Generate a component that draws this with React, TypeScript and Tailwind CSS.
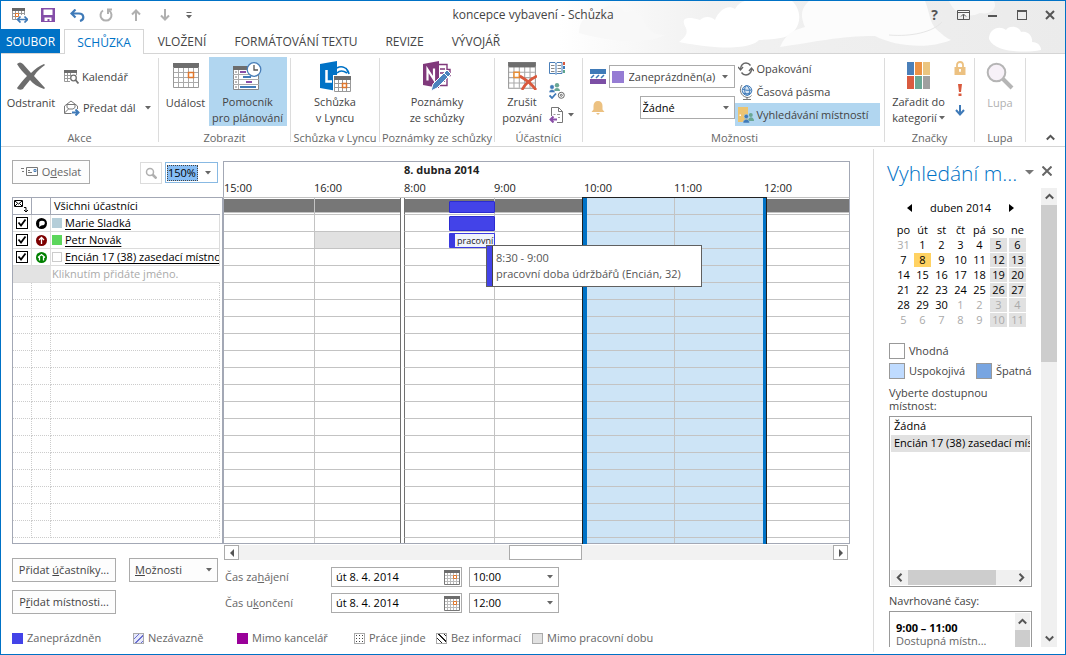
import type { ReactNode } from 'react'
import { clsx } from 'clsx'

const HOURS = ['15:00', '16:00', '8:00', '9:00', '10:00', '11:00', '12:00']
const SELECTED_HOURS = [4, 5]
const EMPTY_ROWS = Array.from({ length: 15 }, (_, i) => i)
const GRID_ROWS = Array.from({ length: 19 }, (_, i) => i)

const WEEK_DAYS = ['po', 'út', 'st', 'čt', 'pá', 'so', 'ne']
const WEEKS = [
  [31, 1, 2, 3, 4, 5, 6],
  [7, 8, 9, 10, 11, 12, 13],
  [14, 15, 16, 17, 18, 19, 20],
  [21, 22, 23, 24, 25, 26, 27],
  [28, 29, 30, 1, 2, 3, 4],
  [5, 6, 7, 8, 9, 10, 11],
]

/* ---------- icons ---------- */

function CaretIcon({ className }: { className?: string }) {
  return (
    <svg viewBox="0 0 6 4" className={clsx('h-1 w-1.5 shrink-0', className)} aria-hidden="true">
      <path d="M0 0h6L3 3.5z" fill="#666" />
    </svg>
  )
}

function ChevronIcon({ className }: { className?: string }) {
  return (
    <svg viewBox="0 0 9 9" className={clsx('size-[9px] shrink-0', className)} fill="none" stroke="#555" strokeWidth="2" aria-hidden="true">
      <path d="M.8 6.5 4.5 2.8l3.7 3.7" />
    </svg>
  )
}

function CalendarIcon({ className, crossed }: { className?: string; crossed?: boolean }) {
  return (
    <svg viewBox="0 0 28 26" className={clsx('shrink-0', className)} aria-hidden="true">
      <path d="M1 1h26v24H1z" fill="#fff" />
      <path d="M6.500 1v23M11.500 1v23M16.500 1v23M21.500 1v23M1 9.500h25M1 14.500h25M1 19.500h25" fill="none" stroke="#aaa" />
      <path d="M1 0h26v5H1z" fill="#6d6d6d" />
      <path d="M1.500 4v20.500h25V4" fill="none" stroke="#999" />
      {crossed ? (
        <>
          <path d="M6.500 9.500h5v5h-5z" fill="#fff" stroke="#e88e35" strokeWidth="1.400" />
          <path d="M12 13c5 3 11 7 15 13M28 13c-6 3-11 7-14 13" fill="none" stroke="#d9593d" strokeWidth="2.600" />
        </>
      ) : (
        <path d="M16.500 9.500h5v5h-5z" fill="#fff" stroke="#e0762b" strokeWidth="1.500" />
      )}
    </svg>
  )
}

function CalendarSearchIcon() {
  return (
    <svg viewBox="0 0 15 14" className="h-3.5 w-[15px] shrink-0" fill="none" aria-hidden="true">
      <path d="M.500 1v10.500H6M12.500 1v4M3.500 3v8M6.500 3v3M1 5.500h5M1 8.500h5" stroke="#999" />
      <path d="M0 0h13v3H0z" fill="#6d6d6d" />
      <circle cx="9.500" cy="8" r="2.800" fill="#fff" stroke="#6d6d6d" strokeWidth="1.300" />
      <path d="m11.500 10 3 3.500" stroke="#6d6d6d" strokeWidth="1.800" />
    </svg>
  )
}

function DateIcon() {
  return (
    <svg viewBox="0 0 16 15" className="h-[15px] w-4" fill="none" aria-hidden="true">
      <path d="M3.500 3v11M6.500 3v11M9.500 3v11M12.500 3v11M1 5.500h14M1 8.500h14M1 11.500h14" stroke="#bbb" />
      <path d="M.500.500v14h15V.500" stroke="#777" />
      <path d="M0 0h16v3H0z" fill="#6d6d6d" />
      <path d="M9.500 5.500h3v3h-3z" fill="#fff" stroke="#e0762b" />
    </svg>
  )
}

function DeleteIcon() {
  return (
    <svg viewBox="0 0 30 28" className="h-7 w-[30px]" aria-hidden="true">
      <path d="M1 2c2-2 4-2 6 0l8 9c4-4 8-7 13-9l1 1C25 6 21 9 18 14l11 12-1 1c-6-2-11-5-14-9-3 4-6 7-7 9-2 1-5 1-6-1 3-4 6-8 10-12C7 10 4 7 1 2z" fill="#6d6d6d" />
    </svg>
  )
}

function ForwardIcon() {
  return (
    <svg viewBox="0 0 16 16" className="size-4 shrink-0" fill="none" aria-hidden="true">
      <path d="M.500 6 7 1l6.500 5v3M.500 6v7.500h7M.500 13l4-4" stroke="#777" />
      <path d="M3 4.500h8v3L9 9H5L3 7.500z" fill="#fff" stroke="#777" />
      <path d="M8 12.500h6M11.500 9.500l3 3-3 3" stroke="#3f7ab8" strokeWidth="2" />
    </svg>
  )
}

function PlannerIcon() {
  return (
    <svg viewBox="0 0 29 28" className="h-7 w-[29px]" aria-hidden="true">
      <path d="M.500 5h25v22.500H.500z" fill="#fff" stroke="#888" />
      <path d="M0 4h26v4H0z" fill="#6d6d6d" />
      <path d="M5.500 8v19M0 12.500h26M0 17.500h26M0 22.500h26" stroke="#aaa" />
      <path d="M2 10h2M2 15h2M2 20h2M2 25h2" stroke="#777" />
      <path d="M7 10h6M13 20h6" stroke="#8a4fa8" strokeWidth="2" />
      <path d="M10 15h8M7 25h16" stroke="#3f7ab8" strokeWidth="2" />
      <circle cx="21" cy="7.500" r="6.800" fill="#fff" stroke="#4a7fb9" strokeWidth="1.300" />
      <path d="M21 3v5h4" fill="none" stroke="#555" strokeWidth="1.300" />
    </svg>
  )
}

function LyncIcon() {
  return (
    <svg viewBox="0 0 32 32" className="size-8" aria-hidden="true">
      <path d="M18 8c5-3 11 0 12 6M18 13c3-3 7-2 10 0M27 8l3 6" fill="none" stroke="#0072c6" strokeWidth="1.600" />
      <path d="M1 4 18 1v30L1 28z" fill="#0072c6" />
      <path d="M7.500 10v11.500H13" fill="none" stroke="#fff" strokeWidth="2.500" />
      <path d="M14 15h18v17H14z" fill="#fff" />
      <path d="M15.500 16v15.500h16V16M19.500 19v12M23.500 19v12M27.500 19v12M15 23.500h16M15 27.500h16" fill="none" stroke="#999" />
      <path d="M15 16h17v4H15z" fill="#6d6d6d" />
      <path d="M23.500 23.500h4v4h-4z" fill="#fff" stroke="#e0762b" strokeWidth="1.500" />
    </svg>
  )
}

function OneNoteIcon() {
  return (
    <svg viewBox="0 0 30 32" className="h-8 w-[30px]" aria-hidden="true">
      <path d="M16 4.500h9v5h3v6h-3v10h-9M18 9h5M18 13h5M18 17h5M18 21h5" fill="none" stroke="#80397b" strokeWidth="1.400" />
      <path d="M1 4 17 1v27L1 25z" fill="#80397b" />
      <path d="M5.500 20.500V9.500l6.500 10V8.500" fill="none" stroke="#fff" strokeWidth="2.200" />
      <path d="m9 31 2-7L25 10l4 4-14 14z" fill="#4a82bd" stroke="#fff" />
      <path d="m22 13 4 4" stroke="#fff" />
    </svg>
  )
}

function AddressBookIcon() {
  return (
    <svg viewBox="0 0 16 14" className="h-3.5 w-4" aria-hidden="true">
      <path d="M.500 1.500H6l1 1 1-1h5v11H8l-1 1-1-1H.500zM7 2v11" fill="#fff" stroke="#4a7fb9" />
      <path d="M2 4.500h3.500M2 7.500h3.500M2 10.500h3.500M8.500 4.500H12M8.500 7.500H12M8.500 10.500H12" stroke="#888" />
      <path d="M14 1h2v3h-2z" fill="#d9593d" />
      <path d="M14 5h2v3h-2z" fill="#3f7ab8" />
      <path d="M14 9h2v3h-2z" fill="#5fa58e" />
    </svg>
  )
}

function CheckNamesIcon() {
  return (
    <svg viewBox="0 0 16 16" className="size-4" aria-hidden="true">
      <circle cx="8" cy="2.300" r="2.200" fill="#6aa795" />
      <path d="M5 8c0-4 6-4 6 0z" fill="#6aa795" />
      <circle cx="3" cy="4" r="2.200" fill="#3f7ab8" stroke="#fff" strokeWidth=".400" />
      <path d="M0 9.500c0-4 6-4 6 0z" fill="#3f7ab8" stroke="#fff" strokeWidth=".400" />
      <path d="m.500 12.500 2.500 2.500L7 10.500" fill="none" stroke="#3f7ab8" strokeWidth="1.800" />
      <circle cx="12.300" cy="12.300" r="3" fill="none" stroke="#666" />
      <circle cx="12.300" cy="12.300" r="1" fill="none" stroke="#666" />
    </svg>
  )
}

function ResponseIcon() {
  return (
    <svg viewBox="0 0 15 16" className="h-4 w-[15px]" aria-hidden="true">
      <path d="M2.500 9V.500h7l4 4v11H8M9.500.500v4h4" fill="#fff" stroke="#777" />
      <path d="M4.500 7.500h2M8 7.500h3M9 10.500h2" stroke="#999" />
      <path d="M8 12.500H2M4.500 9.500l-3 3 3 3" fill="none" stroke="#8a4fa8" strokeWidth="2" />
    </svg>
  )
}

function StatusIcon() {
  return (
    <svg viewBox="0 0 16 15" className="h-[15px] w-4 shrink-0" aria-hidden="true">
      <path d="M0 0h16v5H0z" fill="#3f7ab8" />
      <path d="m1 9 3-3M6 9l3-3M11 9l3-3" stroke="#3f7ab8" strokeWidth="1.500" />
      <path d="M0 10h16v5H0z" fill="#7c4fa5" />
    </svg>
  )
}

function BellIcon() {
  return (
    <svg viewBox="0 0 14 14" className="size-3.5" aria-hidden="true">
      <path d="M7 0c3 0 4.500 2 4.500 5v3.500L13.500 11H.500l2-2.500V5C2.500 2 4 0 7 0zM5 12h4l-2 2z" fill="#ecc181" />
    </svg>
  )
}

function RecurrenceIcon() {
  return (
    <svg viewBox="0 0 16 14" className="h-3.5 w-4 shrink-0" fill="none" stroke="#666" strokeWidth="1.400" aria-hidden="true">
      <path d="M2.500 7C2.500 3.500 5 1 8 1c2 0 3.500 1 4.500 2.500M13.500 7c0 3.500-2.500 6-5.500 6-2 0-3.500-1-4.500-2.500" />
      <path d="m0 5 2.500 3L5 5M11 9l2.500-3L16 9" />
    </svg>
  )
}

function GlobeIcon() {
  return (
    <svg viewBox="0 0 16 16" className="size-4 shrink-0" fill="none" aria-hidden="true">
      <circle cx="9" cy="6.500" r="4.800" fill="#d5e4f3" stroke="#3f7ab8" />
      <path d="M4.500 5c3 1.500 6 1.500 9 1M5 9c3 1 5 1 8 0M8 1.500c-2 3-2 7 1 10M8.500 1.500c4 3 4 7 1 10" stroke="#3f7ab8" />
      <path d="M4 1C1 5 2 12 9 13.500c2 0 3.500-.500 4.500-2M9 13v2M5 15.500h8" stroke="#777" />
    </svg>
  )
}

function RoomFinderIcon() {
  return (
    <svg viewBox="0 0 16 16" className="size-4 shrink-0" aria-hidden="true">
      <path d="M0 0h10v15H0z" fill="#ecc471" />
      <path d="M1.500 7.500h1.500v1.500H1.500z" fill="#fff" />
      <circle cx="12.800" cy="8" r="2" fill="#6aa795" />
      <path d="M10 14c0-5 6-5 6 0z" fill="#6aa795" />
      <circle cx="8.300" cy="9.500" r="2.200" fill="#3f7ab8" stroke="#b1d6f0" strokeWidth=".500" />
      <path d="M5 16c0-5 6.500-5 6.500 0z" fill="#3f7ab8" stroke="#b1d6f0" strokeWidth=".500" />
    </svg>
  )
}

function CategoriesIcon() {
  return (
    <svg viewBox="0 0 23 27" className="h-[27px] w-[23px]" aria-hidden="true">
      <path d="M0 0h7v13H0z" fill="#4a7fb9" />
      <path d="M8 0h7v13H8z" fill="#eb9245" />
      <path d="M16 0h7v13h-7z" fill="#ebc580" />
      <path d="M0 14h7v13H0z" fill="#d95b40" />
      <path d="M8 14h7v13H8z" fill="#6aa795" />
      <path d="M16 14h7v13h-7z" fill="#a0a0a0" />
    </svg>
  )
}

function LockIcon() {
  return (
    <svg viewBox="0 0 12 14" className="h-3.5 w-3" aria-hidden="true">
      <path d="M3 7V4c0-4 6-4 6 0v3" fill="none" stroke="#ecc181" strokeWidth="1.800" />
      <path d="M.500 6h11v8H.500z" fill="#ecc181" />
      <path d="M6 8v3M5 9h2" stroke="#fff" strokeWidth="1.400" />
    </svg>
  )
}

function LensIcon() {
  return (
    <svg viewBox="0 0 28 28" className="size-7" aria-hidden="true">
      <circle cx="10.500" cy="10.500" r="8.800" fill="#f7f1f8" stroke="#b5b5b5" strokeWidth="2" />
      <path d="m17 17 9 9" stroke="#b5b5b5" strokeWidth="4" />
    </svg>
  )
}

function CloudArt() {
  return (
    <svg viewBox="0 0 506 52" preserveAspectRatio="xMaxYMin slice" className="absolute right-0 top-0 h-[52px] w-[506px]" aria-hidden="true">
      <defs>
        <linearGradient id="sky">
          <stop offset="0" stopColor="#fff" />
          <stop offset=".3" stopColor="#f1f1f1" />
          <stop offset="1" stopColor="#ebebeb" />
        </linearGradient>
      </defs>
      <path d="M0 0h506v52H0z" fill="url(#sky)" />
      <path d="M20 32c0-12 6-18 18-18 5-12 22-12 28-3 12-3 19 5 21 14 6 5 7 9 19 9-18 9-50 8-86-2z" fill="#f8f8f8" />
      <path d="M120 41c6-5 9-8 7-14-6-10 0-12 14-8 4-4 11-4 15 0 4-10 13-16 20-11 4-7 10-9 14-8h43c8 7 10 20 3 29-6 8-16 9-36 10-4 5-24 13-80 2z" fill="#fff" />
      <path d="M221 46c6-14 14-17 25-20-6-14-2-20 4-26h116c5 12 4 20 11 28 6 5 10 9 15 11-24 10-56 6-76-4-36 0-60 6-95 11z" fill="#fcfcfc" />
      <path d="M330 34c22 2 44-3 53-13" fill="none" stroke="#e6e6e6" />
      <path d="M390 0h45c4 8-4 14-14 12-12 6-26 1-31-12z" fill="#f8f8f8" />
      <path d="M430 38c0-10 10-14 17-9 3-5 13-4 15 2 8-2 12 6 11 10 6 0 9 4 9 8-16 3-46 3-52-11z" fill="#fff" />
    </svg>
  )
}

/* ---------- shared controls ---------- */

interface SelectProps {
  label: string
  options: string[]
  className: string
  selectClassName?: string
}

function Select({ label, options, className, selectClassName }: SelectProps) {
  return (
    <div className={clsx('relative flex items-center', className)}>
      <select
        aria-label={label}
        className={clsx('h-full w-full appearance-none border-[#ababab] bg-transparent outline-none', selectClassName)}
      >
        {options.map((option) => (
          <option key={option}>{option}</option>
        ))}
      </select>
      <CaretIcon className="pointer-events-none absolute right-1.5" />
    </div>
  )
}

function PushButton({ children, className }: { children: ReactNode; className?: string }) {
  return (
    <button type="button" className={clsx('flex h-6 items-center justify-center border border-[#ababab] bg-[#fdfdfd]', className)}>
      {children}
    </button>
  )
}

function Swatch({ className }: { className: string }) {
  return <span aria-hidden="true" className={clsx('shrink-0', className)} />
}

/* ---------- title bar and tabs ---------- */

function QuickAccess() {
  return (
    <div className="flex items-center gap-[13px] pl-[11px]">
      <button type="button" aria-label="Kalendář" className="w-4">
        <svg viewBox="0 0 16 15" className="h-[15px] w-4" aria-hidden="true">
          <path d="M.500 1v10.500h5M12.500 1v6M3.500 3v8M6.500 3v5M9.500 3v4M1 5.500h11M1 8.500h5" fill="none" stroke="#999" />
          <path d="M0 0h13v3H0z" fill="#666" />
          <path d="M3.500 5.500h3v3h-3z" fill="#fff" stroke="#e0762b" />
          <path d="M6 11.500h9M8.500 8.500l-3 3 3 3M12.500 8.500l3 3-3 3" fill="none" stroke="#3f7ab8" strokeWidth="1.700" />
        </svg>
      </button>
      <button type="button" aria-label="Uložit" className="w-4">
        <svg viewBox="0 0 14 14" className="size-3.5" aria-hidden="true">
          <path d="M0 0h14v14H0z" fill="#844ea8" />
          <path d="M2.500 1.500h9V7h-9zM3.500 9.500h7V13h-2v-2h-2v2h-3z" fill="#fff" />
        </svg>
      </button>
      <button type="button" aria-label="Zpět" className="w-4">
        <svg viewBox="0 0 15 13" className="h-[13px] w-[15px]" fill="none" stroke="#3f7ab8" strokeWidth="2.200" aria-hidden="true">
          <path d="M5.500.500 1.500 4.500l4 4M2 4.500h7c5 0 6 6 1 7.500" />
        </svg>
      </button>
      <button type="button" aria-label="Znovu" className="w-4">
        <svg viewBox="0 0 14 14" className="size-3.5" fill="none" stroke="#b0b0b0" strokeWidth="2" aria-hidden="true">
          <path d="M4 2.500a5.500 5.500 0 1 0 6 0M9 6V1.500h4" />
        </svg>
      </button>
      <button type="button" aria-label="Předchozí" className="w-4">
        <svg viewBox="0 0 10 12" className="mx-auto h-3 w-2.5" fill="none" stroke="#b0b0b0" strokeWidth="2" aria-hidden="true">
          <path d="M5 12V1.500M1 5.500l4-4 4 4" />
        </svg>
      </button>
      <button type="button" aria-label="Další" className="w-4">
        <svg viewBox="0 0 10 12" className="mx-auto h-3 w-2.5" fill="none" stroke="#b0b0b0" strokeWidth="2" aria-hidden="true">
          <path d="M5 0v10.500M1 6.500l4 4 4-4" />
        </svg>
      </button>
      <button type="button" aria-label="Přizpůsobit panel" className="w-2">
        <svg viewBox="0 0 6 7" className="h-[7px] w-1.5" aria-hidden="true">
          <path d="M.500 0h5v1h-5zM0 3h6L3 6.500z" fill="#666" />
        </svg>
      </button>
    </div>
  )
}

function WindowControls() {
  return (
    <div className="flex items-center justify-end pr-[7px] text-[#555]">
      <button type="button" aria-label="Nápověda" className="w-[29px] text-center text-[14px] leading-4 font-bold">?</button>
      <button type="button" aria-label="Možnosti pásu karet" className="flex w-[29px] justify-center">
        <svg viewBox="0 0 13 10" className="h-2.5 w-[13px]" fill="none" stroke="currentColor" aria-hidden="true">
          <path d="M.500.500h12v9H.500zM0 2.500h13M6.500 9V4.500M4 6.500 6.500 4 9 6.500" />
        </svg>
      </button>
      <button type="button" aria-label="Minimalizovat" className="flex w-[29px] justify-center">
        <span className="mt-0.5 h-0.5 w-[9px] bg-[#555]" />
      </button>
      <button type="button" aria-label="Maximalizovat" className="flex w-[29px] justify-center">
        <span className="size-2.5 border border-t-2 border-[#555]" />
      </button>
      <button type="button" aria-label="Zavřít" className="ml-1.5 flex w-4 justify-center">
        <svg viewBox="0 0 10 10" className="size-2.5" stroke="currentColor" strokeWidth="2" aria-hidden="true">
          <path d="m1 1 8 8M9 1 1 9" />
        </svg>
      </button>
    </div>
  )
}

function TitleBar() {
  return (
    <header className="relative">
      <CloudArt />
      <div className="relative grid h-7 grid-cols-[1fr_auto_1fr] items-center">
        <QuickAccess />
        <h1 className="text-[12px] leading-4 text-[#444]">koncepce vybavení - Schůzka</h1>
        <WindowControls />
      </div>
      <nav aria-label="Karty pásu" className="relative flex h-[25px] items-stretch border-b border-[#d5d5d5] text-[12px] leading-4 [&>a]:pt-0.5">
        <a href="#soubor" className="flex w-[59px] items-center justify-center bg-[#0072c6] text-white">SOUBOR</a>
        <a href="#schuzka" aria-current="page" className="-mb-px ml-1 flex w-20 items-center justify-center border border-b-0 border-[#d5d5d5] bg-white text-[#0072c6]">
          SCHŮZKA
        </a>
        <a href="#vlozeni" className="ml-3.5 flex w-12 items-center justify-center">VLOŽENÍ</a>
        <a href="#format" className="ml-7 flex w-[124px] items-center justify-center whitespace-nowrap">FORMÁTOVÁNÍ TEXTU</a>
        <a href="#revize" className="ml-7 flex w-[37px] items-center justify-center">REVIZE</a>
        <a href="#vyvojar" className="ml-7 flex w-[50px] items-center justify-center">VÝVOJÁŘ</a>
      </nav>
    </header>
  )
}

/* ---------- ribbon ---------- */

function RibbonGroup({ title, className, children }: { title: string; className: string; children: ReactNode }) {
  return (
    <section aria-label={title} className={clsx('my-1 flex shrink-0 flex-col border-r border-[#dcdcdc]', className)}>
      <div className="-mt-px flex h-[69px] shrink-0 justify-center">{children}</div>
      <h2 className="mt-1 whitespace-nowrap text-center text-[11px] leading-4 text-[#666]">{title}</h2>
    </section>
  )
}

function LargeButton({ icon, lines, active, className }: { icon: ReactNode; lines: string[]; active?: boolean; className?: string }) {
  return (
    <button type="button" className={clsx('flex flex-col items-center whitespace-nowrap', active && 'bg-[#b1d6f0]', className)}>
      <span className="flex h-[38px] items-center justify-center">{icon}</span>
      {lines.map((line) => (
        <span key={line}>{line}</span>
      ))}
    </button>
  )
}

function SmallButton({ icon, children, active }: { icon: ReactNode; children: ReactNode; active?: boolean }) {
  return (
    <button type="button" className={clsx('flex h-[23px] items-center gap-[3px] whitespace-nowrap pl-[3px]', active && 'bg-[#b1d6f0]')}>
      {icon}
      {children}
    </button>
  )
}

function Ribbon() {
  return (
    <div className="flex h-[93px] border-b border-[#d5d5d5]">
      <RibbonGroup title="Akce" className="w-[158px]">
        <LargeButton icon={<DeleteIcon />} lines={['Odstranit']} className="w-[60px]" />
        <div className="flex flex-1 flex-col gap-2 pt-2">
          <SmallButton icon={<CalendarSearchIcon />}>Kalendář</SmallButton>
          <SmallButton icon={<ForwardIcon />}>
            Předat dál
            <CaretIcon className="ml-1.5" />
          </SmallButton>
        </div>
      </RibbonGroup>
      <RibbonGroup title="Zobrazit" className="w-[132px]">
        <LargeButton icon={<CalendarIcon className="h-[26px] w-7" />} lines={['Událost']} className="w-[46px]" />
        <LargeButton icon={<PlannerIcon />} lines={['Pomocník', 'pro plánování']} active className="w-[78px]" />
      </RibbonGroup>
      <RibbonGroup title="Schůzka v Lyncu" className="w-[89px]">
        <LargeButton icon={<LyncIcon />} lines={['Schůzka', 'v Lyncu']} />
      </RibbonGroup>
      <RibbonGroup title="Poznámky ze schůzky" className="w-[115px]">
        <LargeButton icon={<OneNoteIcon />} lines={['Poznámky', 'ze schůzky']} />
      </RibbonGroup>
      <RibbonGroup title="Účastníci" className="w-[88px]">
        <LargeButton icon={<CalendarIcon crossed className="h-7 w-[30px]" />} lines={['Zrušit', 'pozvání']} className="w-[50px]" />
        <div className="flex flex-col items-start gap-2 pl-0.5 pr-1.5 pt-1">
          <button type="button" aria-label="Adresář"><AddressBookIcon /></button>
          <button type="button" aria-label="Kontrola jmen"><CheckNamesIcon /></button>
          <button type="button" aria-label="Možnosti odpovědi" className="flex items-center gap-1">
            <ResponseIcon />
            <CaretIcon />
          </button>
        </div>
      </RibbonGroup>
      <RibbonGroup title="Možnosti" className="w-[302px] pl-0.5">
        <div className="flex w-[145px] flex-col gap-2 pt-2">
          <div className="flex items-center">
            <StatusIcon />
            <div className="ml-[3px] flex h-[23px] w-[126px] items-center border border-[#ababab] pl-0.5">
              <Swatch className="size-3 bg-[#967cd4]" />
              <Select label="Zobrazit jako" options={['Zaneprázdněn(a)']} className="h-full flex-1" selectClassName="pl-[5px]" />
            </div>
          </div>
          <div className="flex items-center justify-between pl-px">
            <BellIcon />
            <Select label="Připomenutí" options={['Žádné']} className="h-[23px] w-[95px] text-black" selectClassName="border pl-0.5" />
          </div>
        </div>
        <div className="flex w-[145px] flex-col">
          <SmallButton icon={<RecurrenceIcon />}>Opakování</SmallButton>
          <SmallButton icon={<GlobeIcon />}>Časová pásma</SmallButton>
          <SmallButton icon={<RoomFinderIcon />} active>Vyhledávání místností</SmallButton>
        </div>
      </RibbonGroup>
      <RibbonGroup title="Značky" className="w-[90px]">
        <button type="button" className="flex w-[62px] flex-col items-center whitespace-nowrap">
          <span className="flex h-[38px] items-center"><CategoriesIcon /></span>
          <span>Zařadit do</span>
          <span className="flex items-center gap-0.5">
            kategorií
            <CaretIcon />
          </span>
        </button>
        <div className="flex flex-col items-center gap-[9px] pl-1 pr-1.5 pt-1">
          <button type="button" aria-label="Soukromé"><LockIcon /></button>
          <button type="button" aria-label="Vysoká důležitost">
            <svg viewBox="0 0 4 12" className="h-3 w-1" fill="#d9593d" aria-hidden="true">
              <path d="M0 0h4l-1 8H1zM.500 9.500h3V12h-3z" />
            </svg>
          </button>
          <button type="button" aria-label="Nízká důležitost">
            <svg viewBox="0 0 10 11" className="h-[11px] w-2.5" fill="none" stroke="#3f7ab8" strokeWidth="2" aria-hidden="true">
              <path d="M5 0v9.500M1 5l4 4.500L9 5" />
            </svg>
          </button>
        </div>
      </RibbonGroup>
      <RibbonGroup title="Lupa" className="w-[51px]">
        <LargeButton icon={<LensIcon />} lines={['Lupa']} className="text-[#b0b0b0]" />
      </RibbonGroup>
      <button type="button" aria-label="Sbalit pás karet" className="ml-auto mr-2.5 self-end pb-1">
        <ChevronIcon />
      </button>
    </div>
  )
}

/* ---------- attendees ---------- */

function OrganizerIcon() {
  return (
    <svg viewBox="0 0 11 11" className="size-[11px]" aria-hidden="true">
      <circle cx="5.500" cy="5.500" r="5.500" />
      <ellipse cx="6" cy="5" rx="2.800" ry="2.300" fill="#fff" />
      <path d="M3.500 5.500 3 9l3-2z" fill="#fff" />
    </svg>
  )
}

function RequiredIcon() {
  return (
    <svg viewBox="0 0 11 11" className="size-[11px]" aria-hidden="true">
      <circle cx="5.500" cy="5.500" r="5.500" fill="#7d0000" />
      <path d="M5.500 9V3M3 5l2.500-2.500L8 5" fill="none" stroke="#fff" strokeWidth="1.300" />
    </svg>
  )
}

function ResourceIcon() {
  return (
    <svg viewBox="0 0 11 11" className="size-[11px]" aria-hidden="true">
      <circle cx="5.500" cy="5.500" r="5.500" fill="#008000" />
      <path d="m2 5.500 3.500-3 3.500 3M3.500 5v3.500M7.500 5v3.500" fill="none" stroke="#fff" strokeWidth="1.300" />
    </svg>
  )
}

const ATTENDEES = [
  { name: 'Marie Sladká', icon: <OrganizerIcon />, color: 'bg-[#b5ced9]' },
  { name: 'Petr Novák', icon: <RequiredIcon />, color: 'bg-[#5cd65c]' },
  { name: 'Encián 17 (38) zasedací místnost', icon: <ResourceIcon />, color: 'border border-[#ccc] bg-white' },
]

function AttendeeTable() {
  return (
    <div className="flex-1 border-y border-l border-[#a3a8b5] pr-0.5">
      <table className="w-full table-fixed border-separate border-spacing-0 text-left text-[11px] leading-4 text-black">
        <colgroup>
          <col className="w-[19px]" />
          <col className="w-[19px]" />
          <col />
        </colgroup>
        <thead>
          <tr className="h-[17px]">
            <th aria-label="Pozvat" className="border-b border-r border-[#a3a8b5] p-0">
              <svg viewBox="0 0 16 14" className="h-3.5 w-4" fill="none" stroke="#000" aria-hidden="true">
                <path d="M1.500 1.500h8v6h-8zM2 2l3.500 3L9 2M2 7l2.500-2.500M9 7 6.500 4.500M11 8.500h2v4M11 11l2 2 2-2" />
              </svg>
            </th>
            <th aria-label="Role" className="border-b border-r border-[#a3a8b5] p-0" />
            <th className="border-b border-[#a3a8b5] p-0 pl-[3px] font-normal">Všichni účastníci</th>
          </tr>
        </thead>
        <tbody>
          {ATTENDEES.map(({ name, icon, color }) => (
            <tr key={name} className="h-[17px]">
              <td className="border-b border-r border-[#dcdcdc] p-0">
                <span className="relative mx-auto block size-3">
                  <input type="checkbox" defaultChecked aria-label={name} className="peer block size-3 appearance-none border border-black bg-white" />
                  <svg
                    viewBox="0 0 12 12"
                    className="pointer-events-none absolute inset-0 hidden size-3 peer-checked:block"
                    fill="none"
                    stroke="#000"
                    strokeWidth="1.800"
                    aria-hidden="true"
                  >
                    <path d="M2.500 5.500 5 8.500l4.500-6" />
                  </svg>
                </span>
              </td>
              <td className="border-b border-r border-[#dcdcdc] p-0">
                <span className="flex justify-center">{icon}</span>
              </td>
              <td className="overflow-hidden border-b border-r border-[#dcdcdc] p-0">
                <span className="flex h-4 items-center gap-[3px] overflow-hidden whitespace-nowrap pl-px">
                  <Swatch className={clsx('size-2.5', color)} />
                  <a href="#ucastnik" className="underline underline-offset-2">{name}</a>
                </span>
              </td>
            </tr>
          ))}
          <tr className="h-[17px]">
            <td colSpan={2} className="border-b border-[#dcdcdc] bg-[#e3e3e3] p-0" />
            <td className="border-b border-[#dcdcdc] p-0 pl-px text-[#aaa]">Kliknutím přidáte jméno.</td>
          </tr>
          {EMPTY_ROWS.map((row) => (
            <tr key={row} className="h-[17px]">
              <td className="border-b border-r border-dotted border-[#ccc] p-0" />
              <td className="border-b border-r border-dotted border-[#ccc] p-0" />
              <td className="border-b border-r border-dotted border-[#ccc] p-0" />
            </tr>
          ))}
        </tbody>
      </table>
    </div>
  )
}

/* ---------- timeline ---------- */

function TimelineRow({ row, summary, last }: { row: number; summary?: boolean; last?: boolean }) {
  return (
    <div className={clsx('flex', last ? 'h-[5px]' : 'h-[17px]')}>
      {HOURS.map((hour, i) => {
        const selected = SELECTED_HOURS.includes(i)
        return (
          <div key={hour} className={clsx('flex', i === HOURS.length - 1 ? 'flex-1' : 'w-[90px] shrink-0')}>
            <div
              className={clsx(
                'flex-1 border-[#c3c3c3]',
                !last && 'border-b',
                i > 0 && 'border-l',
                i === 2 && 'border-l-[#707070]',
                selected && 'bg-[#cde4f6]',
                row === 1 && i === 1 && 'bg-[#e1e1e1]',
              )}
            >
              {summary && !selected && <div className="mt-px h-3.5 border-b border-[#c3c3c3] bg-[#777]" />}
            </div>
            {i === 1 && <div className="w-1 border-l border-[#707070]" />}
          </div>
        )
      })}
    </div>
  )
}

function Timeline() {
  return (
    <div className="min-w-0 flex-1">
      <div className="ml-px h-9 border-x border-t border-[#a3a8b5] text-[11px] leading-4 text-[#222]">
        <p className="ml-[180px] h-4 font-bold">8. dubna 2014</p>
        <div className="mt-0.5 flex">
          {HOURS.map((hour) => (
            <span key={hour} className="w-[90px] shrink-0 last:w-0 last:flex-1">{hour}</span>
          ))}
        </div>
      </div>
      <div className="relative border-b border-l-2 border-r border-t border-[#a3a8b5] border-t-[#c3c3c3]">
        <TimelineRow row={-1} summary />
        {GRID_ROWS.map((row) => (
          <TimelineRow key={row} row={row} />
        ))}
        <TimelineRow row={99} last />

        {/* busy blocks, placed by time */}
        <div className="absolute left-[225px] top-[3px] h-3 w-[46px] rounded-[1px] border border-[#2b2bd0] bg-[#4343e8]" />
        <div className="absolute left-[225px] top-[18px] h-[15px] w-[46px] rounded-[1px] border border-[#2b2bd0] bg-[#4343e8]" />
        <div className="absolute left-[225px] top-[35px] flex h-[15px] w-[46px] items-center overflow-hidden rounded-[1px] border border-l-[6px] border-[#3a3ae0] bg-[#f0f4fc] pl-0.5 text-[9px] leading-3 text-[#222]">
          pracovní
        </div>

        {/* proposed meeting time */}
        <div className="absolute -bottom-px -top-px left-[358px] w-[185px] border-x border-t border-[#222]">
          <div className="h-full border-x-4 border-r-[3px] border-[#0072c6]" />
        </div>

        <div role="tooltip" className="absolute left-[262px] top-[47px] flex h-[42px] w-[216px] border border-[#606060] bg-white text-[11px] leading-4 text-[#555]">
          <span className="w-1.5 shrink-0 border-r border-[#444] bg-[#4343e8]" />
          <p className="whitespace-nowrap pl-[3px] pt-1">
            8:30 - 9:00
            <br />
            pracovní doba údržbářů (Encián, 32)
          </p>
        </div>
      </div>
    </div>
  )
}

function ScrollTrack() {
  return (
    <div className="ml-0.5 mr-0.5 mt-px flex h-[15px] items-stretch justify-between bg-[#f2f2f2]">
      <button type="button" aria-label="Posunout doleva" className="flex w-[15px] items-center justify-center border border-[#ababab] bg-white">
        <svg viewBox="0 0 4 8" className="h-2 w-1" fill="#555" aria-hidden="true"><path d="M4 0v8L0 4z" /></svg>
      </button>
      <div className="ml-[19px] w-[73px] border border-[#ababab] bg-white" />
      <button type="button" aria-label="Posunout doprava" className="flex w-[15px] items-center justify-center border border-[#ababab] bg-white">
        <svg viewBox="0 0 4 8" className="h-2 w-1" fill="#555" aria-hidden="true"><path d="M0 0v8l4-4z" /></svg>
      </button>
    </div>
  )
}

function TimeField({ id, label, time }: { id: string; label: ReactNode; time: string }) {
  return (
    <div className="flex h-5 items-center">
      <label htmlFor={id} className="w-[106px] text-[#666]">{label}</label>
      <div className="flex h-full w-[131px] items-center justify-between border border-[#ababab] pl-1 pr-px">
        <input id={id} defaultValue="út 8. 4. 2014" className="w-24 text-black outline-none" />
        <button type="button" aria-label="Vybrat datum"><DateIcon /></button>
      </div>
      <Select label="Čas" options={[time]} className="ml-[7px] h-full w-[90px] text-black" selectClassName="border pl-[3px]" />
    </div>
  )
}

const LEGEND = [
  { label: 'Zaneprázdněn', width: 'w-[121px]', swatch: 'bg-[#4343e8]' },
  {
    label: 'Nezávazně',
    width: 'w-[104px]',
    swatch: 'border border-[#aaa] bg-[repeating-linear-gradient(135deg,#e6e8fa_0_3px,#6a70d0_3px_4px)]',
  },
  { label: 'Mimo kancelář', width: 'w-[117px]', swatch: 'bg-[#990099]' },
  {
    label: 'Práce jinde',
    width: 'w-[82px]',
    swatch: 'border border-[#aaa] bg-[radial-gradient(#444_0.6px,white_0.8px)] bg-[size:3px_3px]',
  },
  {
    label: 'Bez informací',
    width: 'w-24',
    swatch: 'border border-[#aaa] bg-[repeating-linear-gradient(45deg,#fff_0_3px,#222_3px_4px)]',
  },
  { label: 'Mimo pracovní dobu', width: 'w-32', swatch: 'border border-[#aaa] bg-[#e1e1e1]' },
]

function Scheduler() {
  return (
    <main className="flex min-w-0 flex-1 flex-col pl-[11px] pr-[23px] pt-3.5">
      <div className="flex">
        <div className="flex w-[210px] shrink-0 flex-col">
          <div className="-mt-px flex h-[37px] items-start">
            <PushButton className="w-[78px] gap-1 text-[#666]">
              <svg viewBox="0 0 17 10" className="h-2.5 w-[17px]" fill="none" stroke="#777" aria-hidden="true">
                <path d="M5.500.500h11v8h-11zM7 5.500h4M7 3.500h2M0 1.500h3M1 4.500h2" />
                <path d="M13 2.500h2v2h-2z" stroke="#4a7fb9" />
              </svg>
              <span>O<u>d</u>eslat</span>
            </PushButton>
            <button type="button" aria-label="Lupa" className="ml-auto mt-0.5 flex size-[22px] items-center justify-center border border-[#dcdcdc]">
              <svg viewBox="0 0 12 12" className="size-3" fill="none" stroke="#b0b0b0" aria-hidden="true">
                <circle cx="5" cy="5" r="3.500" strokeWidth="1.500" />
                <path d="m7.500 7.500 4 4" strokeWidth="2.500" />
              </svg>
            </button>
            <div className="relative ml-[3px] mr-1 mt-0.5 flex h-[21px] w-[53px] items-center border border-[#88b9e3] pl-px">
              <input aria-label="Měřítko" defaultValue="150%" className="h-4 w-[31px] border border-dotted border-[#444] bg-[#86bdf5] text-black outline-none" />
              <CaretIcon className="ml-auto mr-1.5" />
            </div>
          </div>
          <AttendeeTable />
        </div>
        <Timeline />
      </div>

      <div className="flex">
        <div className="w-[210px] shrink-0 pt-3.5">
          <div className="flex items-center justify-between pr-1">
            <PushButton className="w-[104px]"><span>Přidat <u>ú</u>častníky...</span></PushButton>
            <button type="button" className="flex h-6 w-[89px] items-center justify-between border border-[#ababab] bg-[#fdfdfd] px-[5px]">
              <span><u>M</u>ožnosti</span>
              <CaretIcon />
            </button>
          </div>
          <PushButton className="mt-2 w-[104px]"><span>P<u>ř</u>idat místnosti...</span></PushButton>
        </div>
        <div className="min-w-0 flex-1">
          <ScrollTrack />
          <div className="ml-[3px] mt-[7px] flex flex-col gap-1.5">
            <TimeField id="start" label={<>Čas za<u>h</u>ájení</>} time="10:00" />
            <TimeField id="end" label={<>Čas u<u>k</u>ončení</>} time="12:00" />
          </div>
        </div>
      </div>

      <ul className="flex pb-2 pt-4 text-[#666]">
        {LEGEND.map(({ label, width, swatch }) => (
          <li key={label} className={clsx('flex shrink-0 items-center gap-1 whitespace-nowrap', width)}>
            <Swatch className={clsx('size-[11px]', swatch)} />
            {label}
          </li>
        ))}
      </ul>
    </main>
  )
}

/* ---------- room finder ---------- */

function DatePicker() {
  return (
    <div className="w-[133px] self-start text-black">
      <div className="ml-[18px] flex w-[107px] items-center justify-between leading-4">
        <button type="button" aria-label="Předchozí měsíc">
          <svg viewBox="0 0 5 8" className="h-2 w-[5px]" aria-hidden="true"><path d="M5 0v8L0 4z" /></svg>
        </button>
        <span>duben 2014</span>
        <button type="button" aria-label="Další měsíc">
          <svg viewBox="0 0 5 8" className="h-2 w-[5px]" aria-hidden="true"><path d="M0 0v8l5-4z" /></svg>
        </button>
      </div>
      <table className="ml-[5px] mt-1.5 w-[133px] table-fixed border-collapse text-center">
        <thead>
          <tr className="h-[15px] leading-[15px]">
            {WEEK_DAYS.map((day) => (
              <th key={day} className="p-0 font-normal">{day}</th>
            ))}
          </tr>
        </thead>
        <tbody>
          {WEEKS.map((week, w) => (
            <tr key={w} className="h-[15px]">
              {week.map((day, d) => {
                const outside = (w === 0 && day > 20) || (w > 3 && day < 15)
                return (
                  <td key={d} className="p-0">
                    <span
                      className={clsx(
                        'mx-auto block h-3.5 w-[17px] leading-[14px]',
                        outside && 'text-[#aaa]',
                        d > 4 && 'bg-[#e1e1e1]',
                        w === 1 && d === 1 && 'bg-[#ffd262]',
                      )}
                    >
                      {day}
                    </span>
                  </td>
                )
              })}
            </tr>
          ))}
        </tbody>
      </table>
    </div>
  )
}

function RoomFinder() {
  return (
    <aside aria-label="Vyhledání místnosti" className="my-0.5 flex w-48 shrink-0 flex-col border-l border-[#dcdcdc] pl-[15px] pr-2 text-[11px] leading-4">
      <div className="-ml-0.5 flex h-[39px] items-center pt-2">
        <h2 className="whitespace-nowrap text-[21px] leading-7 font-light text-[#0072c6]">Vyhledání m...</h2>
        <button type="button" aria-label="Možnosti podokna" className="ml-auto">
          <svg viewBox="0 0 9 5" className="h-[5px] w-[9px]" fill="#777" aria-hidden="true"><path d="M0 0h9L4.500 4.500z" /></svg>
        </button>
        <button type="button" aria-label="Zavřít podokno" className="ml-2 mr-[5px] pb-1">
          <svg viewBox="0 0 10 10" className="size-2.5" stroke="#666" strokeWidth="2" aria-hidden="true"><path d="m.500.500 9 9M9.500.500l-9 9" /></svg>
        </button>
      </div>
      <div className="flex flex-1">
        <div className="flex min-w-0 flex-1 flex-col pr-[9px] pt-3">
          <DatePicker />
          <ul className="mt-4 flex flex-wrap gap-y-1">
            <li className="flex w-full items-center gap-1"><Swatch className="size-4 border border-[#999] bg-white" />Vhodná</li>
            <li className="flex w-[87px] items-center gap-1"><Swatch className="size-4 border border-[#999] bg-[#bfdbff]" />Uspokojivá</li>
            <li className="flex items-center gap-1"><Swatch className="size-4 border border-[#999] bg-[#78a5e1]" />Špatná</li>
          </ul>
          <h3 id="rooms" className="mt-[7px] leading-[13px]">Vyberte dostupnou místnost:</h3>
          <div role="listbox" aria-labelledby="rooms" className="mt-1 flex h-[171px] flex-col border border-[#999] p-px text-black">
            <div role="option" aria-selected="false" className="h-[17px] pl-[3px]">Žádná</div>
            <div role="option" aria-selected="true" className="h-[17px] overflow-hidden whitespace-nowrap bg-[#e1e1e1] pl-[3px]">Encián 17 (38) zasedací místnost</div>
            <div className="mt-auto flex h-[15px] items-center bg-[#f0f0f0] px-1">
              <ChevronIcon className="-rotate-90" />
              <div className="ml-1 h-full w-[88px] bg-[#cdcdcd]" />
              <ChevronIcon className="ml-auto rotate-90" />
            </div>
          </div>
          <h3 className="mt-[7px] leading-[13px]">Navrhované časy:</h3>
          <div className="mt-1 flex h-9 justify-between border border-b-0 border-[#999] pr-px pt-px">
            <div className="pl-1.5 pt-2 leading-[13px]">
              <p className="font-bold text-black">9:00 – 11:00</p>
              <p className="text-[#666]">Dostupná místn...</p>
            </div>
            <div className="flex w-[15px] flex-col items-center bg-[#f0f0f0]">
              <ChevronIcon className="my-1" />
              <div className="w-full flex-1 bg-[#cdcdcd]" />
            </div>
          </div>
        </div>
        <div className="mb-[5px] flex w-4 shrink-0 flex-col items-center bg-[#f0f0f0]">
          <ChevronIcon className="my-1" />
          <div className="h-[157px] w-full bg-[#cdcdcd]" />
          <ChevronIcon className="mb-1 mt-auto rotate-180" />
        </div>
      </div>
    </aside>
  )
}

export default function App() {
  return (
    <div className="flex min-h-screen flex-col border border-[#0072c6] bg-white font-['Open_Sans','Noto_Sans',sans-serif] text-[11px] leading-4 text-[#444]">
      <TitleBar />
      <Ribbon />
      <div className="flex flex-1">
        <Scheduler />
        <RoomFinder />
      </div>
    </div>
  )
}
